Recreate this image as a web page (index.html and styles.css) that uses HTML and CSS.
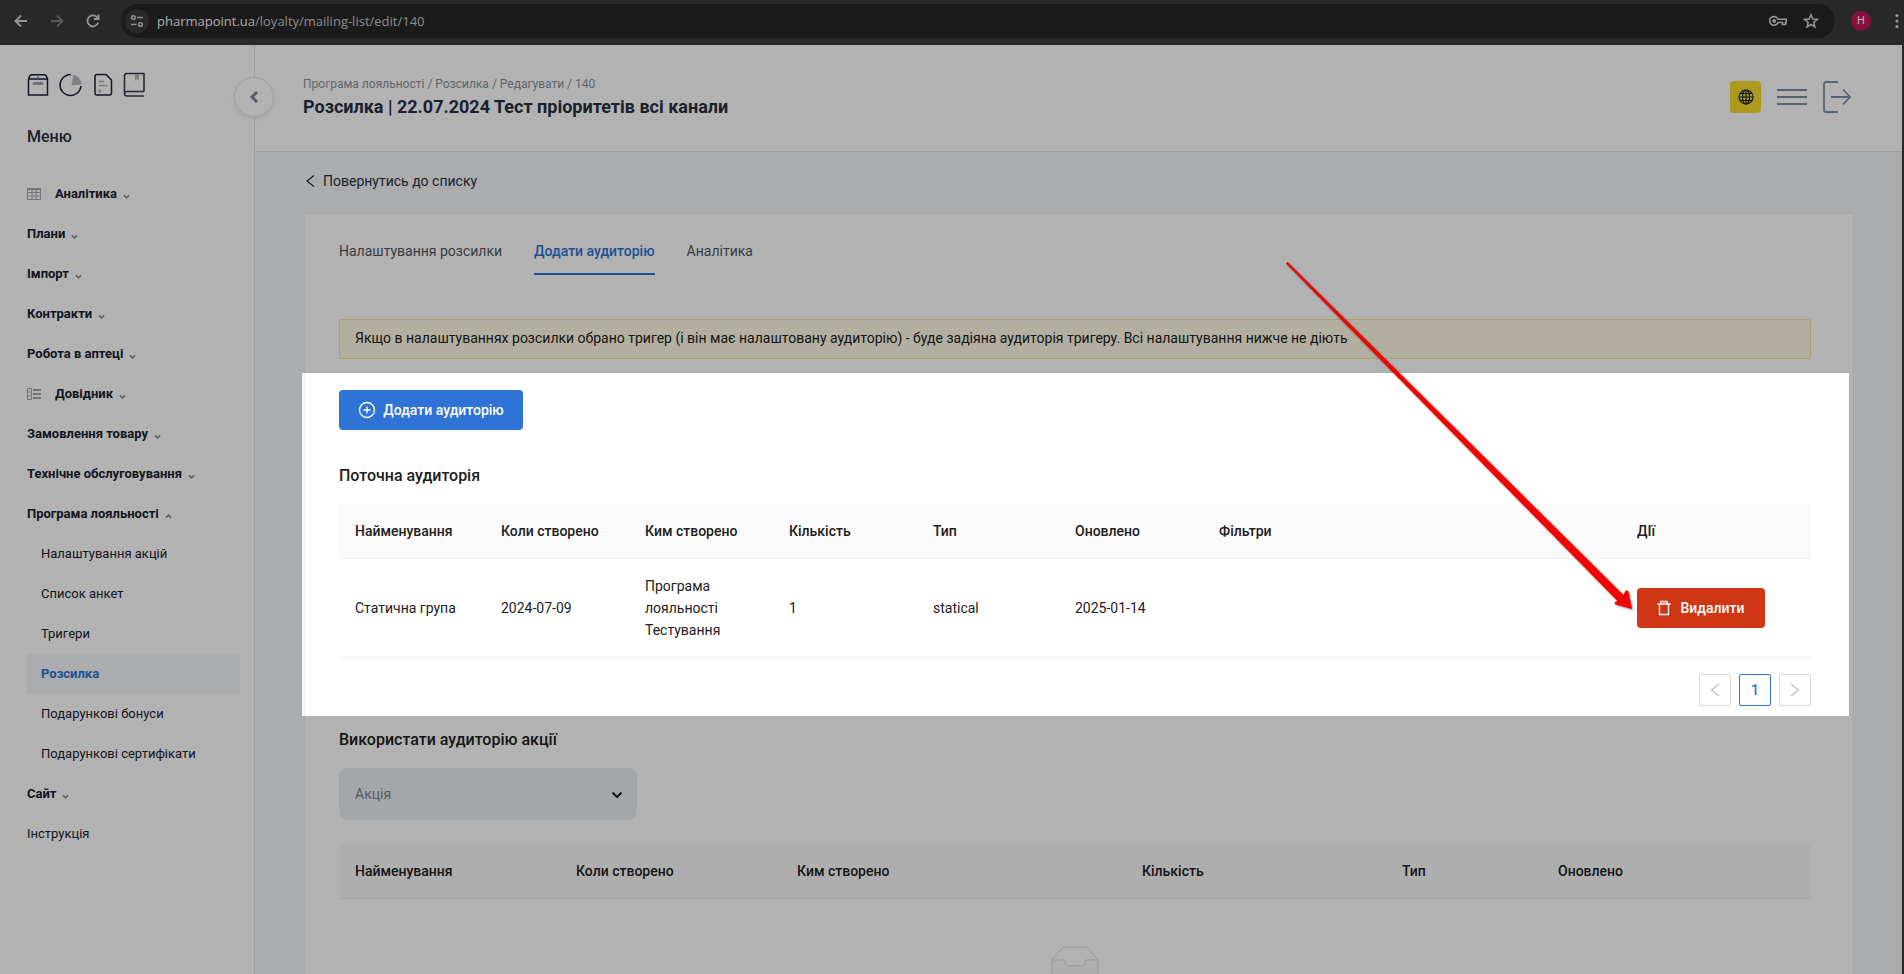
FILE: index.html
```html
<!DOCTYPE html>
<html lang="uk">
<head>
<meta charset="utf-8">
<title>Розсилка | 22.07.2024 Тест пріоритетів всі канали</title>
<link rel="stylesheet" href="styles.css">
</head>
<body>
<svg class="sprite" aria-hidden="true">
  <symbol id="caret" viewBox="0 0 8 8"><path d="M1 2.500 4 5.500 7 2.500" fill="none" stroke="currentColor" stroke-width="1.800"/></symbol>
</svg>
<div class="browser">
  <button class="tool" aria-label="Назад"><svg width="16" height="16" viewBox="0 0 16 16"><path d="M14 8H3M8 2.500 2.500 8 8 13.500" fill="none" stroke="currentColor" stroke-width="1.800"/></svg></button>
  <button class="tool tool-off" aria-label="Вперед" disabled><svg width="16" height="16" viewBox="0 0 16 16"><path d="M2 8h11M8 2.500 13.500 8 8 13.500" fill="none" stroke="currentColor" stroke-width="1.800"/></svg></button>
  <button class="tool" aria-label="Оновити"><svg width="16" height="16" viewBox="0 0 16 16"><path d="M13.200 9.500A5.500 5.500 0 1 1 12.500 4.800M13.500 1.500v4.500H9" fill="none" stroke="currentColor" stroke-width="1.800"/></svg></button>
  <div class="address">
    <button class="site" aria-label="Про сайт"><svg width="14" height="14" viewBox="0 0 14 14"><g fill="none" stroke="currentColor" stroke-width="1.600"><circle cx="3.500" cy="3.500" r="1.800"/><path d="M7 3.500h6M1 10.500h5.500"/><circle cx="10.500" cy="10.500" r="1.800"/></g></svg></button>
    <span class="url"><b>pharmapoint.ua</b>/loyalty/mailing-list/edit/140</span>
    <button class="tool" aria-label="Паролі"><svg width="18" height="12" viewBox="0 0 18 12"><path d="M9 4.300H17.200V7.500H16.500V9.500H13.500V7.500H9A4.300 4.300 0 1 1 9 4.300Z" fill="none" stroke="currentColor" stroke-width="1.600"/><circle cx="5.200" cy="6" r="1.900" fill="currentColor"/></svg></button>
    <button class="tool" aria-label="Закладка"><svg width="16" height="16" viewBox="0 0 16 16"><path d="M8 1.800 9.800 6l4.500.4-3.400 3 1 4.500L8 11.500l-3.900 2.400 1-4.500-3.400-3L6.200 6Z" fill="none" stroke="currentColor" stroke-width="1.500"/></svg></button>
  </div>
  <button class="avatar" aria-label="Профіль">Н</button>
  <button class="tool" aria-label="Меню браузера"><svg width="4" height="16" viewBox="0 0 4 16"><g fill="currentColor"><circle cx="2" cy="2.500" r="1.600"/><circle cx="2" cy="8" r="1.600"/><circle cx="2" cy="13.500" r="1.600"/></g></svg></button>
</div>

<div class="app">
  <aside class="sidebar">
    <button class="collapse" aria-label="Згорнути меню"><svg width="10" height="14" viewBox="0 0 10 14"><path d="M8 2 3 7l5 5" fill="none" stroke="currentColor" stroke-width="3"/></svg></button>
    <div class="shortcuts">
      <a href="#" aria-label="Архів"><svg width="22" height="24" viewBox="0 0 22 24"><g fill="none" stroke="#1a2233" stroke-width="1.500"><path d="M1.500 6 3 2.500Q3.500 1.800 4.500 1.800h13q1 0 1.500.7L20.500 6v16H1.500V6ZM1.500 6h19"/></g><path d="M7 10.500h8" stroke="#9ea3ac" stroke-width="3" stroke-linecap="round"/><path d="M11 2v3.500" stroke="#777d88"/></svg></a>
      <a href="#" aria-label="Звіти"><svg width="24" height="24" viewBox="0 0 24 24"><path d="M12 1.500A10.500 10.500 0 1 0 22 13" fill="none" stroke="#1a2233" stroke-width="1.500"/><path d="M14.500 1.500Q22 4 22.500 11.500L12.500 12.500Z" fill="#b5b8be"/></svg></a>
      <a href="#" aria-label="Документи"><svg width="20" height="24" viewBox="0 0 20 24"><path d="M4 1.500h9L18.500 7v13q0 2-2 2H4q-2 0-2-2V3.500q0-2 2-2Z" fill="none" stroke="#1a2233" stroke-width="1.500"/><path d="M5.500 8.500h6M5.500 12.500h9" stroke="#a9adb5" stroke-width="1.700"/><circle cx="6.800" cy="18" r="1.500" fill="#a9adb5"/></svg></a>
      <a href="#" aria-label="Довідка"><svg width="22" height="26" viewBox="0 0 22 26"><path d="M21 19.500V1.500H4Q1.500 1.500 1.500 4v17.500Q1.500 24 4 24h17M21 19.500H4q-2 0-2.500 2" fill="none" stroke="#353b4a" stroke-width="1.600"/><path d="M12 2v7l2-2 2 2V2Z" fill="#b5b8be"/></svg></a>
    </div>
    <h2 class="menu-title">Меню</h2>
    <nav class="menu">
      <a class="item" href="#"><svg class="item-icon" width="14" height="12" viewBox="0 0 14 12"><path d="M.5 1h13v10.500H.5ZM.5 4.500h13M.5 8h13M5 1v10.500M9 1v10.500" fill="none" stroke="currentColor"/><path d="M0 1h14" stroke="currentColor" stroke-width="2"/></svg>Аналітика<svg class="caret"><use href="#caret"/></svg></a>
      <a class="item" href="#">Плани<svg class="caret"><use href="#caret"/></svg></a>
      <a class="item" href="#">Імпорт<svg class="caret"><use href="#caret"/></svg></a>
      <a class="item" href="#">Контракти<svg class="caret"><use href="#caret"/></svg></a>
      <a class="item" href="#">Робота в аптеці<svg class="caret"><use href="#caret"/></svg></a>
      <a class="item" href="#"><svg class="item-icon" width="14" height="12" viewBox="0 0 14 12"><path d="M.5.500h4v11h-4ZM.5 4h4M.5 8h4" fill="none" stroke="currentColor"/><path d="M6 2h8M6 6h8M6 10h8" stroke="currentColor" stroke-width="2"/></svg>Довідник<svg class="caret"><use href="#caret"/></svg></a>
      <a class="item" href="#">Замовлення товару<svg class="caret"><use href="#caret"/></svg></a>
      <a class="item" href="#">Технічне обслуговування<svg class="caret"><use href="#caret"/></svg></a>
      <a class="item" href="#">Програма лояльності<svg class="caret caret-up"><use href="#caret"/></svg></a>
      <a class="item sub" href="#">Налаштування акцій</a>
      <a class="item sub" href="#">Список анкет</a>
      <a class="item sub" href="#">Тригери</a>
      <a class="item sub active" href="#" aria-current="page">Розсилка</a>
      <a class="item sub" href="#">Подарункові бонуси</a>
      <a class="item sub" href="#">Подарункові сертифікати</a>
      <a class="item" href="#">Сайт<svg class="caret"><use href="#caret"/></svg></a>
      <a class="item plain" href="#">Інструкція</a>
    </nav>
  </aside>

  <div class="page">
    <header class="header">
      <div class="heading">
        <div class="crumbs">Програма лояльності / Розсилка / Редагувати / 140</div>
        <h1 class="title">Розсилка | 22.07.2024 Тест пріоритетів всі канали</h1>
      </div>
      <div class="actions">
        <button class="lang" aria-label="Мова"><svg width="16" height="16" viewBox="0 0 16 16"><g fill="none" stroke="#1a2233" stroke-width="1.200"><circle cx="8" cy="8" r="7"/><ellipse cx="8" cy="8" rx="3.500" ry="7"/><path d="M1 8h14M8 1v14M2 4.500h12M2 11.500h12"/></g></svg></button>
        <button class="bare" aria-label="Меню"><svg width="30" height="32" viewBox="0 0 30 32"><path d="M0 9h30M0 16h30M0 23h30" stroke="currentColor" stroke-width="2"/></svg></button>
        <button class="bare" aria-label="Вийти"><svg width="28" height="32" viewBox="0 0 28 32"><path d="M15 1H3Q1 1 1 3v26q0 2 2 2h12M8 16h19M20 8.500 27 16l-7 7.500" fill="none" stroke="currentColor" stroke-width="1.800"/></svg></button>
      </div>
    </header>

    <main class="content">
      <a class="back" href="#"><svg width="10" height="12" viewBox="0 0 10 12"><path d="M9 .5 2 6l7 5.500" fill="none" stroke="currentColor" stroke-width="1.300"/></svg>Повернутись до списку</a>
      <div class="card">
        <nav class="tabs">
          <a class="tab" href="#">Налаштування розсилки</a>
          <a class="tab tab-on" href="#" aria-current="page">Додати аудиторію</a>
          <a class="tab" href="#">Аналітика</a>
        </nav>
        <div class="alert">Якщо в налаштуваннях розсилки обрано тригер (і він має налаштовану аудиторію) - буде задіяна аудиторія тригеру. Всі налаштування нижче не діють</div>

        <section class="current">
          <button class="btn btn-add"><svg width="18" height="18" viewBox="0 0 18 18"><g fill="none" stroke="currentColor" stroke-width="1.300"><circle cx="9" cy="9" r="7.500"/><path d="M9 5.500v7M5.500 9h7"/></g></svg>Додати аудиторію</button>
          <h3 class="subtitle">Поточна аудиторія</h3>
          <table class="grid">
            <colgroup><col class="w-146"><col class="w-144"><col class="w-144"><col class="w-144"><col class="w-142"><col class="w-144"><col><col class="w-190"></colgroup>
            <thead><tr><th>Найменування</th><th>Коли створено</th><th>Ким створено</th><th>Кількість</th><th>Тип</th><th>Оновлено</th><th>Фільтри</th><th>ДІї</th></tr></thead>
            <tbody><tr><td>Статична група</td><td>2024-07-09</td><td>Програма лояльності Тестування</td><td>1</td><td>statical</td><td>2025-01-14</td><td></td>
              <td><button class="btn btn-del"><svg width="14" height="16" viewBox="0 0 14 16"><path d="M.5 4h13M4 3.500V1.500h6v2M2.500 4v10.500h9V4" fill="none" stroke="currentColor" stroke-width="1.300"/></svg>Видалити</button></td></tr></tbody>
          </table>
          <div class="pager">
            <button class="pg" aria-label="Попередня" disabled><svg width="10" height="14" viewBox="0 0 10 14"><path d="M9 1 1.500 7 9 13" fill="none" stroke="currentColor" stroke-width="1.300"/></svg></button>
            <button class="pg pg-on">1</button>
            <button class="pg" aria-label="Наступна" disabled><svg width="10" height="14" viewBox="0 0 10 14"><path d="M1 1 8.500 7 1 13" fill="none" stroke="currentColor" stroke-width="1.300"/></svg></button>
          </div>
          <div class="spotlight"></div>
          <svg class="pointer" width="350" height="352" viewBox="0 0 350 352" aria-hidden="true"><path d="M0 1.500 1.500 0 337.500 333 339 329.500Q341 327.500 342.500 330L346 347 329.500 342.500Q327.500 340.500 330 339.500L331.500 339Z" fill="#f60000"/></svg>
        </section>

        <section class="promo">
          <h3 class="subtitle"><label for="promo">Використати аудиторію акції</label></h3>
          <div class="select">
            <select id="promo"><option>Акція</option></select>
            <svg class="select-caret" width="12" height="8" viewBox="0 0 12 8"><path d="M1.500 1.500 6 6l4.500-4.500" fill="none" stroke="currentColor" stroke-width="2"/></svg>
          </div>
          <table class="grid">
            <colgroup><col class="w-221"><col class="w-221"><col><col class="w-260"><col class="w-156"><col class="w-269"></colgroup>
            <thead><tr><th>Найменування</th><th>Коли створено</th><th>Ким створено</th><th>Кількість</th><th>Тип</th><th>Оновлено</th></tr></thead>
            <tbody><tr><td class="empty" colspan="6"><svg width="64" height="41" viewBox="0 0 64 41"><g transform="translate(0 1)"><ellipse fill="#f5f5f5" cx="32" cy="33" rx="32" ry="7"/><g stroke="#d9d9d9" fill="none"><path d="M55 12.760L44.854 1.258C44.367.474 43.656 0 42.907 0H21.093c-.749 0-1.460.474-1.947 1.257L9 12.761V22h46v-9.240z"/><path d="M41.613 15.931c0-1.605.994-2.930 2.227-2.931H55v18.137C55 33.260 53.680 35 52.050 35h-40.100C10.320 35 9 33.259 9 31.137V13h11.160c1.233 0 2.227 1.323 2.227 2.928v.022c0 1.605 1.005 2.901 2.237 2.901h14.752c1.232 0 2.237-1.308 2.237-2.913v-.007z" fill="#fafafa"/></g></g></svg></td></tr></tbody>
          </table>
        </section>
      </div>
    </main>
  </div>
</div>
</body>
</html>
```

FILE: styles.css
```css
* { box-sizing: border-box; }

body {
  margin: 0;
  height: 100vh;
  overflow: hidden;
  display: flex;
  flex-direction: column;
  background: #3c3c3c;
  color: #212121;
  font: 14px/22px Roboto, "Noto Sans", sans-serif;
}

button, select { font: inherit; color: inherit; }
button { border: 0; padding: 0; background: none; }
a { color: inherit; text-decoration: none; }
h1, h2, h3 { margin: 0; }
svg { display: block; flex: none; }
.sprite { position: absolute; width: 0; height: 0; }

/* Browser bar */
.browser {
  flex: none;
  display: flex;
  align-items: center;
  height: 45px;
  padding: 0 5px 3px 13px;
  gap: 20px;
  background: #3c3c3c;
  color: #c7c7c7;
}
.tool { color: #d6d6d6; }
.tool-off { color: #7c7c7c; }
.address {
  flex: 1;
  display: flex;
  align-items: center;
  height: 34px;
  gap: 16px;
  padding: 0 16px 0 4px;
  border-radius: 17px;
  background: #282828;
}
.site {
  display: flex;
  align-items: center;
  justify-content: center;
  width: 24px;
  height: 24px;
  border-radius: 50%;
  background: #3c3c3c;
}
.url { flex: 1; margin-left: -8px; font: 13px/22px "Open Sans", "Noto Sans", sans-serif; }
.url b { font-weight: 400; color: #f2f2f2; }
.avatar {
  width: 20px;
  height: 20px;
  margin: 0 4px 0 -4px;
  border-radius: 50%;
  background: #c2185b;
  color: #fff;
  font-size: 11px;
  line-height: 20px;
}

/* Shell */
.app { flex: 1; display: flex; min-height: 0; margin-right: 2px; background: #fff; }
.sidebar {
  position: relative;
  flex: none;
  width: 255px;
  padding: 27px 14px 0 27px;
  border-right: 1px solid #e0e6ee;
}
.collapse {
  position: absolute;
  top: 32px;
  right: -20px;
  display: flex;
  align-items: center;
  justify-content: center;
  width: 40px;
  height: 40px;
  border: 1px solid #e0e6ee;
  border-radius: 50%;
  background: #fff;
  color: #7b8494;
  box-shadow: 0 2px 4px rgba(0, 0, 0, .08);
}
.shortcuts { display: flex; align-items: center; gap: 10px; height: 26px; }
.menu-title { margin-top: 27px; font-size: 16px; font-weight: 500; line-height: 24px; color: #273142; }
.menu { margin-top: 25px; }
.item {
  display: flex;
  align-items: center;
  height: 40px;
  font-size: 13px;
  font-weight: 700;
  color: #1b2130;
}
.item-icon { margin-right: 14px; color: #a4a9b1; }
.caret { width: 7px; height: 7px; margin: 4px 0 0 6px; color: #808894; }
.caret-up { transform: rotate(180deg); }
.sub { padding-left: 14px; font-weight: 400; }
.plain { font-weight: 400; }
.active { background: #f4f7fa; color: #2e73d5; font-weight: 700; }

/* Page */
.page { flex: 1; min-width: 0; display: flex; flex-direction: column; background: #f4f7fa; }
.header {
  flex: none;
  display: flex;
  align-items: center;
  justify-content: space-between;
  height: 107px;
  padding: 0 51px 2px 48px;
  border-bottom: 1px solid #dfe5ec;
  background: #fff;
}
.crumbs { font-size: 12px; line-height: 20px; color: #8a8f99; }
.title { font-size: 18px; font-weight: 700; line-height: 26px; color: #273142; }
.actions { display: flex; align-items: center; gap: 16px; color: #7f8fa4; }
.bare { color: inherit; }
.lang {
  display: flex;
  align-items: center;
  justify-content: center;
  width: 31px;
  height: 32px;
  border-radius: 4px;
  background: #fadb2e;
}
.content { flex: none; padding: 18px 48px 49px 49px; }
.back { display: flex; align-items: center; gap: 8px; padding-left: 1px; color: #273142; }
.card {
  margin-top: 21px;
  padding: 26px 42px 34px 34px;
  border: 1px solid #eff1f4;
  background: #fff;
}
.tabs { display: flex; gap: 32px; color: #4f5764; }
.tab { height: 35px; }
.tab-on { border-bottom: 2px solid #2e73d5; color: #2e73d5; font-weight: 500; }
.alert {
  margin-top: 44px;
  padding: 7px 15px 9px;
  border: 1px solid #ffe58f;
  border-radius: 2px;
  background: #fffbe6;
}

/* Audience */
.current { position: relative; margin-top: 31px; }
.btn {
  display: inline-flex;
  align-items: center;
  justify-content: center;
  height: 40px;
  border-radius: 4px;
  color: #fff;
  font-weight: 500;
}
.btn-add { width: 184px; gap: 7px; background: #2e73d5; }
.btn-del { width: 128px; gap: 9px; background: #ce3614; }
.subtitle { font-size: 16px; font-weight: 500; line-height: 24px; }
.current .subtitle { margin-top: 34px; }
.grid {
  width: 100%;
  margin-top: 16px;
  border-collapse: separate;
  border-spacing: 0;
  table-layout: fixed;
  text-align: left;
}
.grid th { padding: 16px; border-bottom: 1px solid #f0f0f0; background: #fafafa; font-weight: 500; }
.grid td { padding: 16px; border-bottom: 1px solid #f0f0f0; }
.w-142 { width: 142px; }
.w-144 { width: 144px; }
.w-146 { width: 146px; }
.w-156 { width: 156px; }
.w-190 { width: 190px; }
.w-221 { width: 221px; }
.w-260 { width: 260px; }
.w-269 { width: 269px; }
.pager { display: flex; justify-content: flex-end; gap: 8px; margin-top: 16px; }
.pg {
  display: flex;
  align-items: center;
  justify-content: center;
  width: 32px;
  height: 32px;
  border: 1px solid #d9d9d9;
  border-radius: 2px;
  color: #bfbfbf;
}
.pg-on { border-color: #2e73d5; color: #2e73d5; font-weight: 500; }

/* Dims everything outside the audience section */
.spotlight {
  position: absolute;
  z-index: 10;
  inset: -17px -38px -10px -37px;
  box-shadow: 0 0 0 4000px rgba(0, 0, 0, .3);
  pointer-events: none;
}
.pointer {
  position: absolute;
  z-index: 11;
  top: -128px;
  right: 175px;
  filter: drop-shadow(1px 1px 1px rgba(0, 0, 0, .5));
  pointer-events: none;
}

.promo { margin-top: 22px; }
.select { position: relative; width: 298px; margin-top: 16px; }
.select select {
  appearance: none;
  display: block;
  width: 100%;
  height: 52px;
  padding: 0 16px;
  border: 0;
  border-radius: 8px;
  background: #ebf0f4;
  color: #7c838e;
}
.select-caret { position: absolute; right: 14px; top: 23px; }
.promo .grid { margin-top: 24px; }
.grid .empty { padding: 47px 16px; }
.empty svg { margin: 0 auto; }
```
